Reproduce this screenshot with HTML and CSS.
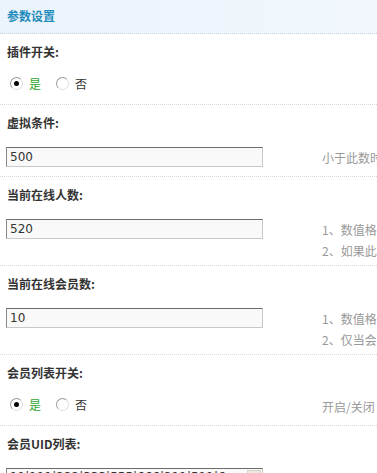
FILE: index.html
```html
<!DOCTYPE html>
<html lang="zh-CN">
<head>
  <meta charset="UTF-8" />
  <title>参数设置</title>
  <link rel="stylesheet" href="styles.css">
</head>
<body>
  <div class="panel">
    <div class="panel-head">参数设置</div>

    <div class="item">
      <div class="label">插件开关:</div>
      <div class="value radios">
        <div class="choices">
          <span class="radio on"></span><span class="opt yes">是</span>
          <span class="radio"></span><span class="opt">否</span>
        </div>
      </div>
    </div>

    <div class="item">
      <div class="label">虚拟条件:</div>
      <div class="value">
        <div class="field">500</div>
        <div class="desc">
          <p>小于此数时</p>
        </div>
      </div>
    </div>

    <div class="item">
      <div class="label">当前在线人数:</div>
      <div class="value">
        <div class="field">520</div>
        <div class="desc">
          <p>1、数值格</p>
          <p>2、如果此</p>
        </div>
      </div>
    </div>

    <div class="item">
      <div class="label">当前在线会员数:</div>
      <div class="value">
        <div class="field">10</div>
        <div class="desc">
          <p>1、数值格</p>
          <p>2、仅当会</p>
        </div>
      </div>
    </div>

    <div class="item">
      <div class="label">会员列表开关:</div>
      <div class="value radios">
        <div class="choices">
          <span class="radio on"></span><span class="opt yes">是</span>
          <span class="radio"></span><span class="opt">否</span>
        </div>
        <div class="desc desc-low"><p>开启/关闭</p></div>
      </div>
    </div>

    <div class="item">
      <div class="label">会员UID列表:</div>
      <div class="value">
        <div class="field area">11|111|222|333|555|666|211|511|6<span class="scroll-up"></span></div>
        <div class="desc"><p>在线会员</p></div>
      </div>
    </div>
  </div>
</body>
</html>
```

FILE: styles.css
```css
html, body {
  overflow: hidden;
}
body {
  margin: 0;
  background: #fff;
  font-family: "Noto Sans CJK SC", "Liberation Sans", sans-serif;
  font-size: 12px;
  color: #333;
}
.panel {
  width: 377px;
}
.panel-head {
  height: 34px;
  line-height: 32px;
  padding-left: 7px;
  background: linear-gradient(to right, #ebf3fb, #f1f7fd);
  border-bottom: 1px dotted #c3d3de;
  color: #1f8bbd;
  font-weight: bold;
  box-sizing: border-box;
}
.item {
  border-bottom: 1px dotted #d3d9de;
}
.label {
  height: 36px;
  line-height: 36px;
  padding-left: 7px;
  font-weight: bold;
  color: #333;
  box-sizing: border-box;
}
.value {
  display: flex;
  align-items: flex-start;
  padding: 6px 0 4px 6px;
}
.field {
  flex-shrink: 0;
  width: 257px;
  height: 20px;
  line-height: 19px;
  margin-bottom: 5px;
  padding-left: 3px;
  box-sizing: border-box;
  background: #f9f9f9;
  border: 1px solid #c8c8c8;
  border-top-color: #6b6b6b;
  border-left-color: #8a8a8a;
  font-family: "DejaVu Sans", Verdana, sans-serif;
  font-size: 12px;
  color: #333;
  white-space: nowrap;
  overflow: hidden;
}
.field.area {
  position: relative;
  height: 24px;
  line-height: 14px;
  padding-top: 1px;
  margin-bottom: 0;
}
.scroll-up {
  position: absolute;
  right: 1px;
  top: 1px;
  width: 14px;
  height: 14px;
  background: #ece9e3;
  border: 1px solid #d8d4cc;
  box-sizing: border-box;
}
.desc {
  flex-shrink: 0;
  margin-left: 59px;
  color: #999;
}
.desc p {
  margin: 0;
  height: 21px;
  line-height: 21px;
  white-space: nowrap;
}
.radios {
  align-items: center;
  height: 25px;
  padding: 1px 0 8px 6px;
}
.choices {
  flex-shrink: 0;
  width: 253px;
  padding-left: 4px;
  display: flex;
  align-items: center;
}
.radio {
  flex-shrink: 0;
  width: 11px;
  height: 11px;
  border-radius: 50%;
  border: 1px solid #9a9a9a;
  border-right-color: #e0e0e0;
  border-bottom-color: #e0e0e0;
  background: #fff;
  position: relative;
  margin-right: 6px;
}
.radio.on::after {
  content: "";
  position: absolute;
  left: 3px;
  top: 3px;
  width: 5px;
  height: 5px;
  border-radius: 50%;
  background: #000;
}
.opt {
  margin-right: 15px;
}
.opt.yes {
  color: #2da52d;
}
.desc-low {
  padding-top: 4px;
}
```
